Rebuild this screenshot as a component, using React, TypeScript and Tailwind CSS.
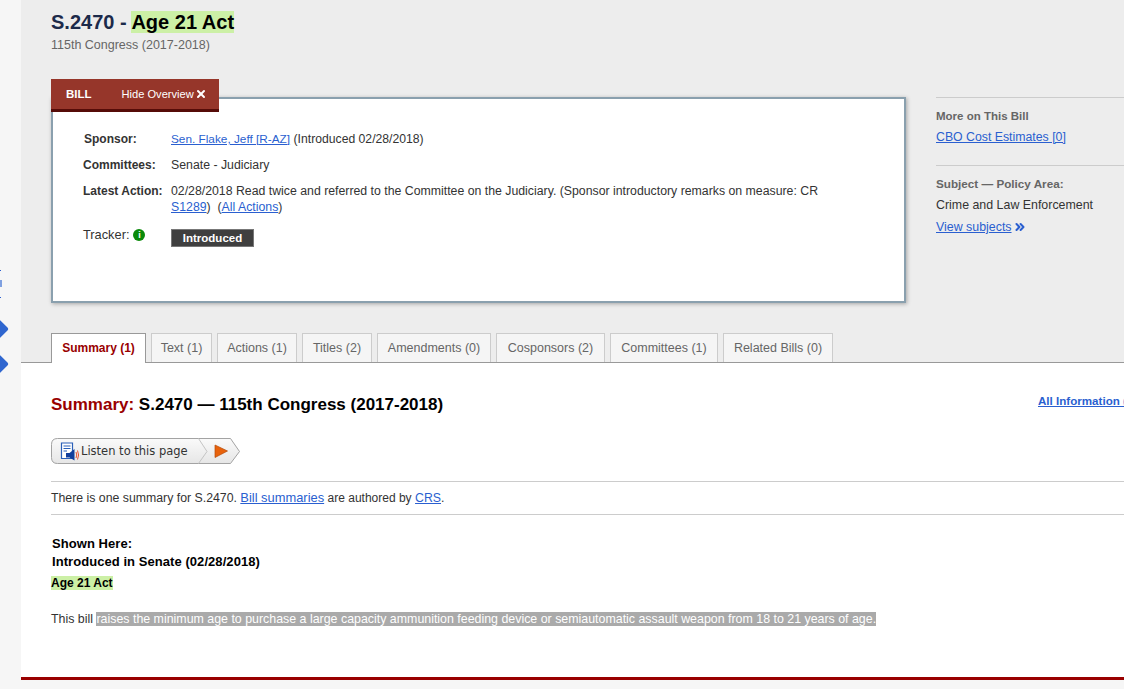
import { ChevronsRight, X } from 'lucide-react';

const tabs = [
  { label: 'Text (1)', width: 'w-[61px]' },
  { label: 'Actions (1)', width: 'w-[80px]' },
  { label: 'Titles (2)', width: 'w-[70px]' },
  { label: 'Amendments (0)', width: 'w-[114px]' },
  { label: 'Cosponsors (2)', width: 'w-[109px]' },
  { label: 'Committees (1)', width: 'w-[108px]' },
  { label: 'Related Bills (0)', width: 'w-[110px]' },
];

const linkClass = 'text-[#2a5fd0] underline';

function InfoRow({ label, labelClass = '', children, className = '' }: { label: React.ReactNode; labelClass?: string; children: React.ReactNode; className?: string }) {
  return (
    <div className={`flex ${className}`}>
      <div className={`w-[88px] shrink-0 font-bold text-[12px] text-[#333] ${labelClass}`}>{label}</div>
      <div className="flex-1 text-[#333]">{children}</div>
    </div>
  );
}

function ListenButton() {
  return (
    <div className="relative w-[190px] h-[27px] mt-[22px]">
      <svg width="190" height="27" viewBox="0 0 190 27" className="absolute inset-0">
        <defs>
          <linearGradient id="btn" x1="0" y1="0" x2="0" y2="1">
            <stop offset="0" stopColor="#fafafa" />
            <stop offset="1" stopColor="#e6e6e6" />
          </linearGradient>
        </defs>
        <path d="M6.5 .5H179.5L188.5 13.5L179.5 25.5H6.5Q.5 25.5 .5 19.5V6.5Q.5 .5 6.5 .5Z" fill="url(#btn)" stroke="#a3a3a3" />
        <path d="M147.5 .5L156 13.5L147.5 25.5" fill="none" stroke="#c4c4c4" />
        <path d="M164 7L176.5 13L164 19.5Z" fill="#e8620c" stroke="#b54a08" strokeWidth=".7" />
        <path d="M10.5 5H21.5V20.5H10.5Z" fill="#fff" stroke="#2a5fb8" strokeWidth="1.2" />
        <path d="M12.5 8H19.5M12.5 10.5H19.5M12.5 13H16" stroke="#2a5fb8" strokeWidth="1" />
        <path d="M15 15H18.5L23.5 11V22.5L18.5 19.5H15Z" fill="#123f9c" />
        <path d="M25 14Q26.5 17 25 20M26.5 12.5Q28.7 17 26.5 21.5" fill="none" stroke="#e8431c" strokeWidth=".9" />
      </svg>
      <span className="absolute left-[30px] top-[5px] text-[11.5px] leading-[16px] text-[#333] font-['DejaVu_Sans',sans-serif]">Listen to this page</span>
    </div>
  );
}

export default function App() {
  return (
    <div className="flex w-[1124px] h-[689px] overflow-hidden bg-[#f6f6f6] font-['Liberation_Sans',Arial,sans-serif] text-[12.3px] leading-[16px] text-[#333]">
      <div className="relative w-[21px] shrink-0">
        <div className="absolute left-0 top-[270px] w-[1px] h-[1px] bg-[#2a5fd0]" />
        <div className="absolute left-0 top-[280px] w-[2px] h-[7px] bg-[#7fa0e0]" />
        <div className="absolute left-0 top-[297px] w-[1px] h-[1px] bg-[#2a5fd0]" />
        <div className="absolute -left-[8px] top-[322px] w-[14px] h-[14px] rotate-45 bg-[#2f66cf] rounded-[2px]" />
        <div className="absolute -left-[8px] top-[357px] w-[14px] h-[14px] rotate-45 bg-[#2f66cf] rounded-[2px]" />
      </div>

      <div className="flex-1 min-w-0 flex flex-col">
        {/* bill header */}
        <div className="h-[363px] shrink-0 bg-[#ededed] border-b border-[#999] pl-[30px] flex flex-col">
          <h1 className="mt-[10px] h-[24px] text-[20px] leading-[24px] font-bold text-[#1c2a4a] whitespace-nowrap">
            S.2470 - <span className="bg-[#ccf0a6] text-black">Age 21 Act</span>
          </h1>
          <p className="mt-[3px] text-[12.5px] text-[#666] leading-[16px]">115th Congress (2017-2018)</p>

          <div className="mt-[26px] flex">
            <div className="w-[855px] shrink-0">
              <div className="relative z-10 w-[168px] h-[33px] -mb-[15px] bg-[#96362a] border-b-[3px] border-[#560c08] flex items-center text-white">
                <span className="ml-[15px] font-bold text-[11.5px]">BILL</span>
                <span className="ml-[30px] text-[11.1px] flex items-center gap-[1px]">
                  Hide Overview <X size={12} strokeWidth={4} />
                </span>
              </div>
              <div className="h-[206px] bg-white border-2 border-[#8aa0ae] shadow-[1px_1px_4px_rgba(0,0,0,0.3)] pl-[30px] pr-[60px] pt-[32px]">
                <InfoRow label="Sponsor:" labelClass="pl-[1px] text-[11.5px]">
                  <a className={`${linkClass} text-[11.8px]`}>Sen. Flake, Jeff [R-AZ]</a> <span className="text-[12.2px]">(Introduced 02/28/2018)</span>
                </InfoRow>
                <InfoRow label="Committees:" className="mt-[10px]">Senate - Judiciary</InfoRow>
                <InfoRow label="Latest Action:" className="mt-[10px]">
                  02/28/2018 Read twice and referred to the Committee on the Judiciary. (Sponsor introductory remarks on measure: CR <a className={linkClass}>S1289</a>)&nbsp; (<a className={linkClass}>All Actions</a>)
                </InfoRow>
                <InfoRow
                  className="mt-[12px]"
                  label={
                    <span className="flex items-center gap-[4px] font-normal text-[12.8px]">
                      Tracker:
                      <span className="w-[12px] h-[12px] rounded-full bg-[#0a8a0a] text-white text-[9px] leading-[12px] font-bold text-center">i</span>
                    </span>
                  }
                >
                  <div className="mt-[2px] w-[83px] h-[18px] bg-[#3f3f3f] border border-[#777] text-white font-bold text-[11.5px] leading-[16px] text-center">Introduced</div>
                </InfoRow>
              </div>
            </div>

            <aside className="ml-[30px] mt-[18px] flex-1 min-w-0">
              <div className="border-t border-[#ccc] h-[68px] pt-[10px]">
                <div className="font-bold text-[11.5px] text-[#666]">More on This Bill</div>
                <a className={`${linkClass} block mt-[5px]`}>CBO Cost Estimates [0]</a>
              </div>
              <div className="border-t border-[#ccc] pt-[10px]">
                <div className="font-bold text-[11.7px] text-[#666]">Subject — Policy Area:</div>
                <div className="mt-[5px] text-[12.4px]">Crime and Law Enforcement</div>
                <a className={`${linkClass} flex items-center mt-[6px] text-[12.4px]`}>View subjects <ChevronsRight size={14} strokeWidth={3.5} className="ml-[1px]" /></a>
              </div>
            </aside>
          </div>

          {/* tabs */}
          <div className="mt-auto -mb-px flex gap-[5px] h-[30px] text-[12px]">
            <div className="w-[95px] h-[30px] bg-white border border-b-0 border-[#999] text-center leading-[28px] font-bold text-[#990000]">Summary (1)</div>
            {tabs.map((tab) => (
              <div key={tab.label} className={`${tab.width} h-[29px] bg-[#f5f5f5] border border-b-0 border-[#ccc] text-center leading-[29px] text-[12.5px] text-[#666]`}>
                {tab.label}
              </div>
            ))}
          </div>
        </div>

        {/* summary */}
        <div className="h-[317px] shrink-0 bg-white border-b-[3px] border-[#990000] pl-[30px]">
          <div className="mt-[31px] flex items-start justify-between whitespace-nowrap">
            <h2 className="text-[17px] leading-[22px] font-bold text-black">
              <span className="text-[#990000]">Summary:</span> S.2470 — 115th Congress (2017-2018)
            </h2>
            <a className="w-[86px] -mt-[1px] overflow-hidden font-bold text-[11.6px] text-[#2a5fd0] underline">All Information (Except Text)</a>
          </div>
          <ListenButton />
          <div className="mt-[16px] border-y border-[#ccc] h-[34px] leading-[32px]">
            There is one summary for S.2470. <a className={`${linkClass} text-[12.9px]`}>Bill summaries</a> <span className="text-[12px]">are authored by</span> <a className={linkClass}>CRS</a>.
          </div>
          <div className="mt-[20px] pl-[1px] text-[13px] tracking-[0.06px] leading-[18px] font-bold text-black">
            <div>Shown Here:</div>
            <div>Introduced in Senate (02/28/2018)</div>
          </div>
          <div className="mt-[4px] text-[12px] font-bold text-black"><span className="bg-[#ccf0a6] inline-block leading-[14px]">Age 21 Act</span></div>
          <p className="mt-[20px] text-[12.4px]">
            This bill <span className="bg-[#aaaaaa] text-white">raises the minimum age to purchase a large capacity ammunition feeding device or semiautomatic assault weapon from 18 to 21 years of age.</span>
          </p>
        </div>
      </div>
    </div>
  );
}
